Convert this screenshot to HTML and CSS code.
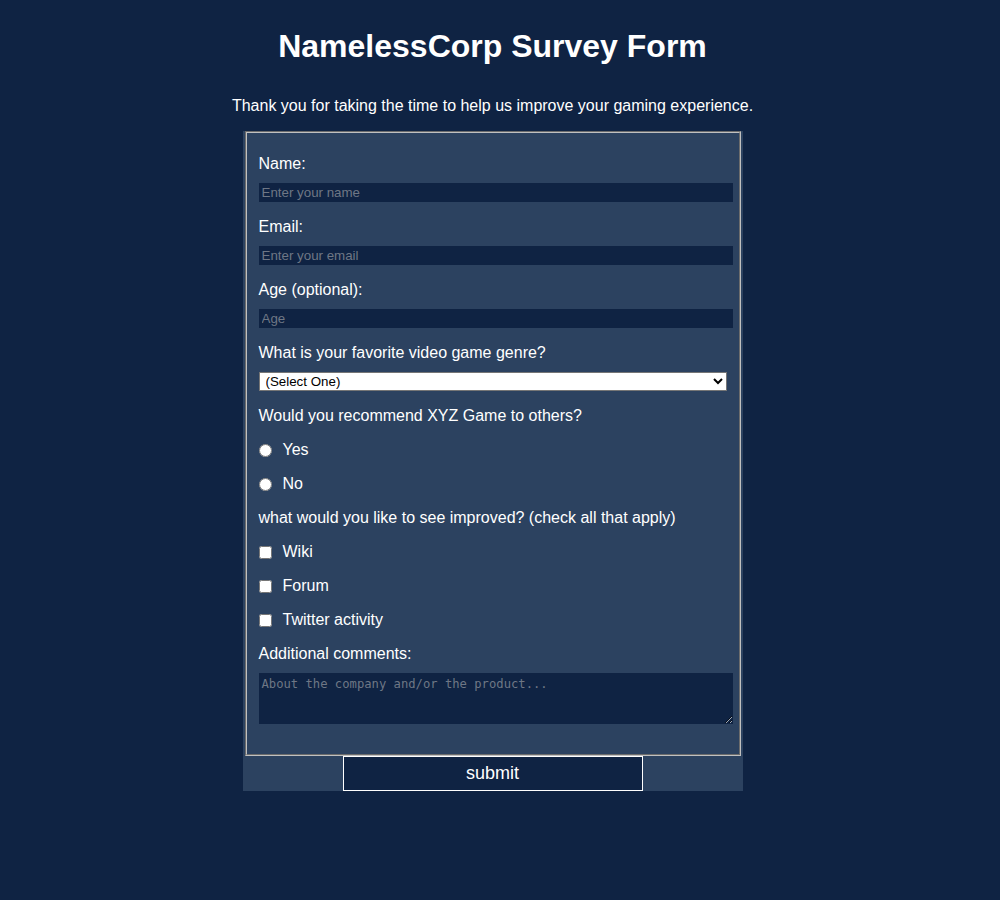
FILE: index.html
```html
<!DOCTYPE html>
<html lang="en">
<head>
<meta charset="utf-8">
<title>NamelessCorp Survey Form</title>
<link rel="stylesheet" href="styles.css">
</head>
<body>
<main class="page">
  <h1 class="title">NamelessCorp Survey Form</h1>
  <p class="description">Thank you for taking the time to help us improve your gaming experience.</p>
  <form class="survey">
    <fieldset class="fields">
      <label class="q" for="name">Name:</label>
      <input class="text" id="name" type="text" placeholder="Enter your name">
      <label class="q" for="email">Email:</label>
      <input class="text" id="email" type="email" placeholder="Enter your email">
      <label class="q" for="age">Age (optional):</label>
      <input class="text" id="age" type="number" placeholder="Age">
      <label class="q" for="genre">What is your favorite video game genre?</label>
      <select class="dropdown" id="genre">
        <option>(Select One)</option>
        <option>Action</option>
        <option>RPG</option>
        <option>Strategy</option>
      </select>
      <p class="q opts">Would you recommend XYZ Game to others?</p>
      <label class="opt"><input type="radio" name="rec"> Yes</label>
      <label class="opt"><input type="radio" name="rec"> No</label>
      <p class="q opts">what would you like to see improved? (check all that apply)</p>
      <label class="opt"><input type="checkbox"> Wiki</label>
      <label class="opt"><input type="checkbox"> Forum</label>
      <label class="opt"><input type="checkbox"> Twitter activity</label>
      <label class="q" for="comments">Additional comments:</label>
      <textarea class="comments" id="comments" placeholder="About the company and/or the product..."></textarea>
    </fieldset>
    <button class="submit" type="submit">submit</button>
  </form>
</main>
</body>
</html>
```
FILE: styles.css
```css
html, body {
  margin: 0;
  padding: 0;
  background: #0f2343;
}

body {
  font-family: "Liberation Sans", Arial, sans-serif;
  color: #ffffff;
}

.page {
  width: 985px;
  display: flex;
  flex-direction: column;
  align-items: center;
}

.title {
  font-size: 32px;
  font-weight: bold;
  line-height: 37px;
  margin: 28px 0 0;
}

.description {
  font-size: 16px;
  margin: 32px 0 16px;
}

.survey {
  width: 500px;
  background: #2c4260;
  display: flex;
  flex-direction: column;
}

.fields {
  margin: 0 2px;
  border: 2px groove #c0c0c0;
  padding: 21px 12px 30px;
  min-width: 0;
}

.q {
  display: block;
  font-size: 16px;
  line-height: 18px;
  padding-top: 1px;
  margin: 0 0 10px;
}

.q.opts {
  margin-bottom: 15px;
}

.text {
  display: block;
  box-sizing: border-box;
  width: calc(100% + 6px);
  height: 19px;
  margin: 0 0 15px;
  padding: 0 3px;
  border: none;
  background: #0f2343;
  color: #ffffff;
  font-family: "Liberation Sans", Arial, sans-serif;
  font-size: 13.33px;
}

.text::placeholder {
  color: #6e7785;
}

.dropdown {
  display: block;
  box-sizing: border-box;
  width: 100%;
  height: 19px;
  margin: 0 0 15px;
  font-family: "Liberation Sans", Arial, sans-serif;
  font-size: 13.33px;
  background: #ffffff;
  color: #000000;
  border: 1px solid #767676;
  padding: 0 2px;
}

.opt {
  display: flex;
  align-items: center;
  height: 18px;
  padding-top: 1px;
  font-size: 16px;
  margin: 0 0 15px;
}

.opt input {
  width: 13px;
  height: 13px;
  margin: 1px 11px 0 0;
}

.comments {
  display: block;
  box-sizing: border-box;
  width: calc(100% + 6px);
  height: 51px;
  margin: 0;
  padding: 4px 3px;
  border: none;
  background: #0f2343;
  color: #ffffff;
  font-family: "DejaVu Sans Mono", "Liberation Mono", monospace;
  font-size: 12.2px;
}

.comments::placeholder {
  color: #6e7785;
}

.submit {
  display: block;
  align-self: center;
  width: 300px;
  height: 35px;
  background: #0f2343;
  color: #ffffff;
  border: 1px solid #ffffff;
  font-family: "Liberation Sans", Arial, sans-serif;
  font-size: 18px;
  padding: 0;
}
```
